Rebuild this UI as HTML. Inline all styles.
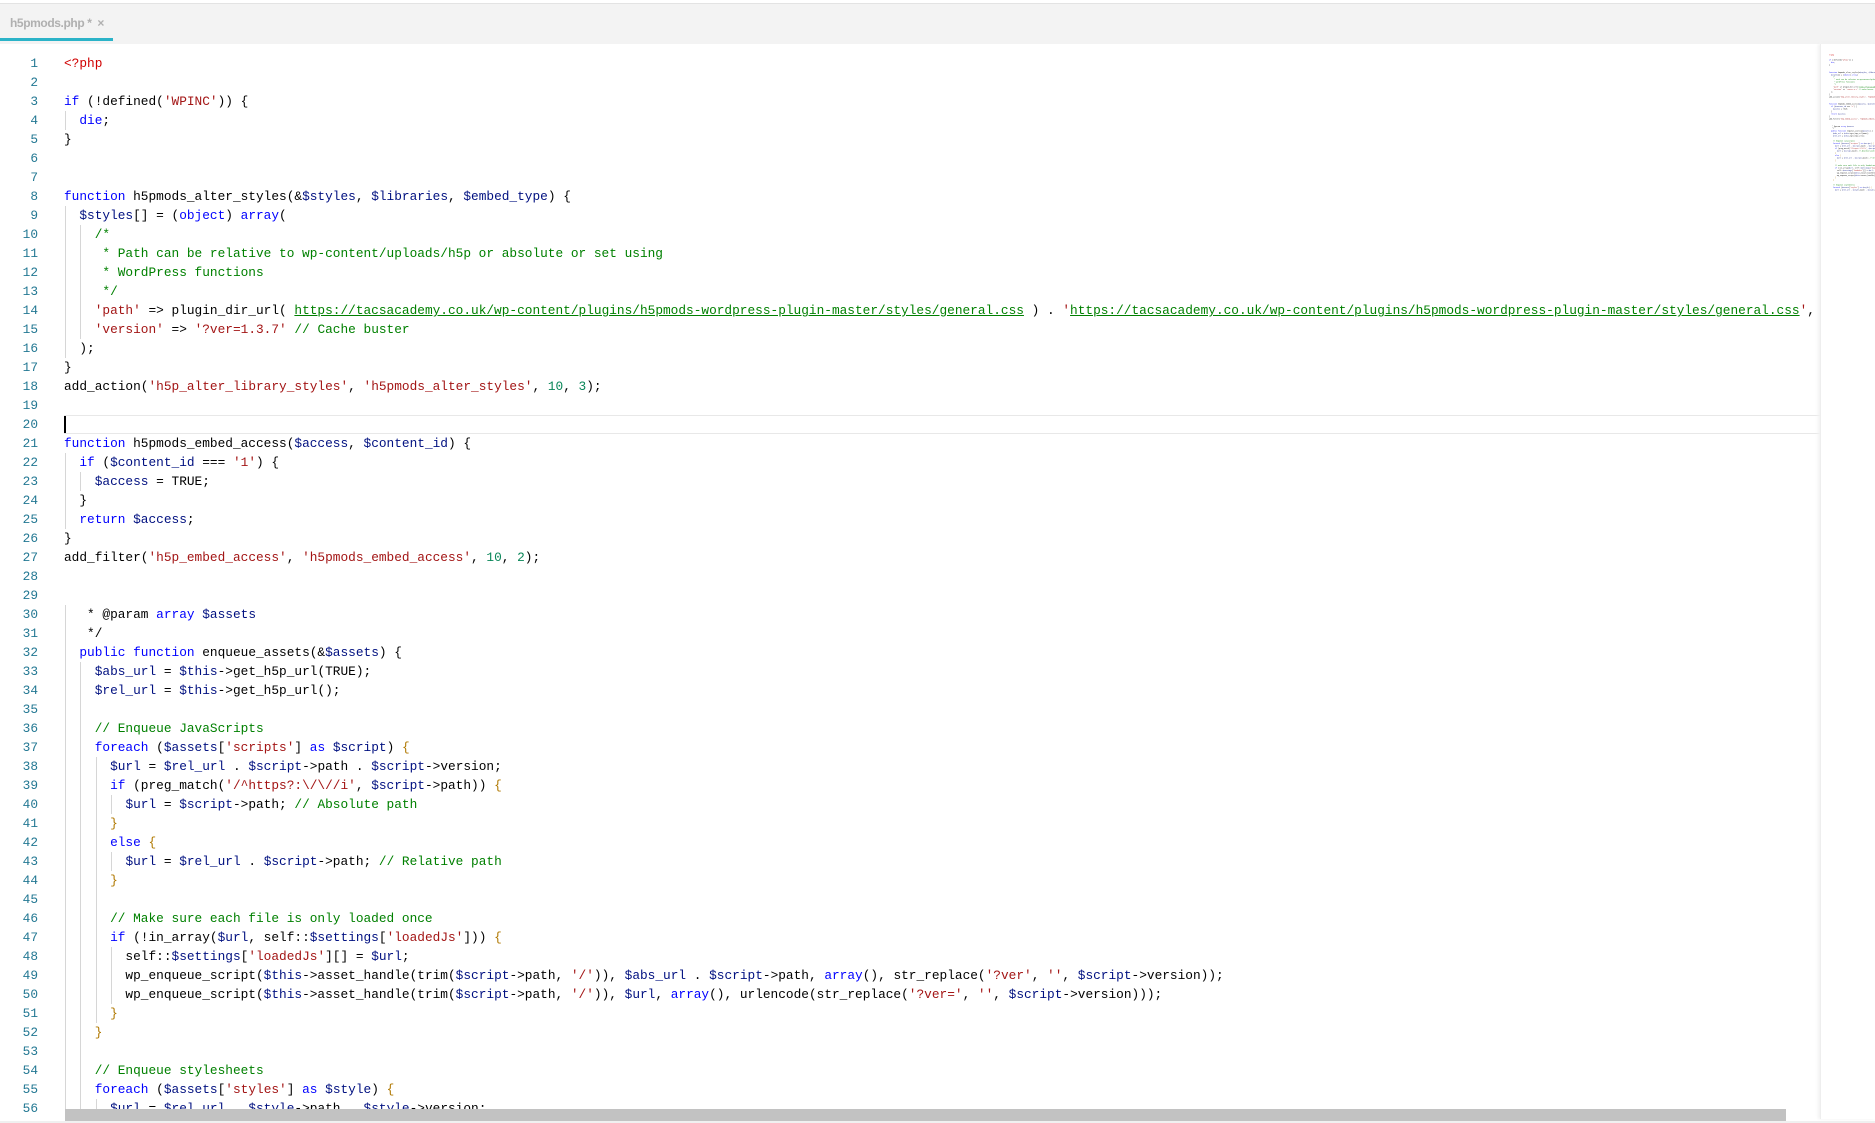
<!DOCTYPE html>
<html><head><meta charset="utf-8"><style>
html,body{margin:0;padding:0;width:1875px;height:1123px;overflow:hidden;background:#fff}
#top{position:absolute;left:0;top:0;width:1875px;height:3px;background:#fff;border-bottom:1px solid #e3e3e3}
#tabbar{position:absolute;left:0;top:4px;width:1875px;height:40px;background:#f3f3f3}
#tab{position:absolute;left:0;top:0;width:113px;height:37px;border-bottom:3px solid #2bb3c8;font:bold 12px "Liberation Sans",sans-serif;color:#b0b0b0;line-height:38px;padding-left:10px;box-sizing:border-box;letter-spacing:-0.4px}
#ed{position:absolute;left:0;top:54px;width:1820px;height:1060px;font:12.8px/19px "Liberation Mono",monospace;color:#000}
.ln{position:absolute;left:0;width:38px;text-align:right;color:#237893}
.cl{position:absolute;left:64px;white-space:pre}
.g{position:absolute;width:1px;height:19px;background:#d6d6d6}
.k{color:#0000ff}.s{color:#a31515}.c{color:#008000}.v{color:#001080}.n{color:#098658}.b{color:#b07800}
.b0{color:#000}
.u{color:#008000;text-decoration:underline}
#cur{position:absolute;left:64px;top:361px;width:1756px;height:17px;border-top:1px solid #e8e8e8;border-bottom:1px solid #e8e8e8}
#caret{position:absolute;left:64px;top:362px;width:1.5px;height:17px;background:#000}
#mm{position:absolute;left:1820px;top:44px;width:55px;height:1075px;border-left:1px solid #eee;box-shadow:-2px 0 3px #f2f2f2;overflow:hidden;background:#fff}
#mmi{position:absolute;left:8px;top:10px;transform:scale(0.129);transform-origin:0 0;font:12.8px/19px "Liberation Mono",monospace;white-space:pre;width:1800px}
#sb{position:absolute;left:65px;top:1109px;width:1721px;height:12px;background:#c2c2c2}
#bot{position:absolute;left:0;top:1121px;width:1875px;height:2px;background:#f0f0f0}
</style></head><body>
<div id="top"></div>
<div id="tabbar"><div id="tab">h5pmods.php * &nbsp;×</div></div>
<div id="ed"><div id="cur"></div><div id="caret"></div></div>
<div id="mm"><div id="mmi"></div></div>
<div id="sb"></div><div id="bot"></div>
<script>
var U='https://tacsacademy.co.uk/wp-content/plugins/h5pmods-wordpress-plugin-master/styles/general.css';
var L=[
'<span style="color:#d00000">&lt;?php</span>',
'',
'<span class="k">if</span> (!defined(<span class="s">\'WPINC\'</span>)) <span class="b0">{</span>',
'  <span class="k">die</span>;',
'<span class="b0">}</span>',
'','',
'<span class="k">function</span> h5pmods_alter_styles(&amp;<span class="v">$styles</span>, <span class="v">$libraries</span>, <span class="v">$embed_type</span>) <span class="b0">{</span>',
'  <span class="v">$styles</span>[] = (<span class="k">object</span>) <span class="k">array</span>(',
'    <span class="c">/*</span>',
'<span class="c">     * Path can be relative to wp-content/uploads/h5p or absolute or set using</span>',
'<span class="c">     * WordPress functions</span>',
'<span class="c">     */</span>',
'    <span class="s">\'path\'</span> =&gt; plugin_dir_url( <span class="u">'+U+'</span> ) . <span class="s">\'</span><span class="u">'+U+'</span><span class="s">\'</span>,',
'    <span class="s">\'version\'</span> =&gt; <span class="s">\'?ver=1.3.7\'</span> <span class="c">// Cache buster</span>',
'  );',
'<span class="b0">}</span>',
'add_action(<span class="s">\'h5p_alter_library_styles\'</span>, <span class="s">\'h5pmods_alter_styles\'</span>, <span class="n">10</span>, <span class="n">3</span>);',
'','',
'<span class="k">function</span> h5pmods_embed_access(<span class="v">$access</span>, <span class="v">$content_id</span>) <span class="b0">{</span>',
'  <span class="k">if</span> (<span class="v">$content_id</span> === <span class="s">\'1\'</span>) <span class="b0">{</span>',
'    <span class="v">$access</span> = TRUE;',
'  <span class="b0">}</span>',
'  <span class="k">return</span> <span class="v">$access</span>;',
'<span class="b0">}</span>',
'add_filter(<span class="s">\'h5p_embed_access\'</span>, <span class="s">\'h5pmods_embed_access\'</span>, <span class="n">10</span>, <span class="n">2</span>);',
'','',
'   * @param <span class="k">array</span> <span class="v">$assets</span>',
'   */',
'  <span class="k">public</span> <span class="k">function</span> enqueue_assets(&amp;<span class="v">$assets</span>) <span class="b0">{</span>',
'    <span class="v">$abs_url</span> = <span class="v">$this</span>-&gt;get_h5p_url(TRUE);',
'    <span class="v">$rel_url</span> = <span class="v">$this</span>-&gt;get_h5p_url();',
'',
'    <span class="c">// Enqueue JavaScripts</span>',
'    <span class="k">foreach</span> (<span class="v">$assets</span>[<span class="s">\'scripts\'</span>] <span class="k">as</span> <span class="v">$script</span>) <span class="b">{</span>',
'      <span class="v">$url</span> = <span class="v">$rel_url</span> . <span class="v">$script</span>-&gt;path . <span class="v">$script</span>-&gt;version;',
'      <span class="k">if</span> (preg_match(<span class="s">\'/^https?:\\/\\//i\'</span>, <span class="v">$script</span>-&gt;path)) <span class="b">{</span>',
'        <span class="v">$url</span> = <span class="v">$script</span>-&gt;path; <span class="c">// Absolute path</span>',
'      <span class="b">}</span>',
'      <span class="k">else</span> <span class="b">{</span>',
'        <span class="v">$url</span> = <span class="v">$rel_url</span> . <span class="v">$script</span>-&gt;path; <span class="c">// Relative path</span>',
'      <span class="b">}</span>',
'',
'      <span class="c">// Make sure each file is only loaded once</span>',
'      <span class="k">if</span> (!in_array(<span class="v">$url</span>, self::<span class="v">$settings</span>[<span class="s">\'loadedJs\'</span>])) <span class="b">{</span>',
'        self::<span class="v">$settings</span>[<span class="s">\'loadedJs\'</span>][] = <span class="v">$url</span>;',
'        wp_enqueue_script(<span class="v">$this</span>-&gt;asset_handle(trim(<span class="v">$script</span>-&gt;path, <span class="s">\'/\'</span>)), <span class="v">$abs_url</span> . <span class="v">$script</span>-&gt;path, <span class="k">array</span>(), str_replace(<span class="s">\'?ver\'</span>, <span class="s">\'\'</span>, <span class="v">$script</span>-&gt;version));',
'        wp_enqueue_script(<span class="v">$this</span>-&gt;asset_handle(trim(<span class="v">$script</span>-&gt;path, <span class="s">\'/\'</span>)), <span class="v">$url</span>, <span class="k">array</span>(), urlencode(str_replace(<span class="s">\'?ver=\'</span>, <span class="s">\'\'</span>, <span class="v">$script</span>-&gt;version)));',
'      <span class="b">}</span>',
'    <span class="b">}</span>',
'',
'    <span class="c">// Enqueue stylesheets</span>',
'    <span class="k">foreach</span> (<span class="v">$assets</span>[<span class="s">\'styles\'</span>] <span class="k">as</span> <span class="v">$style</span>) <span class="b">{</span>',
'      <span class="v">$url</span> = <span class="v">$rel_url</span> . <span class="v">$style</span>-&gt;path . <span class="v">$style</span>-&gt;version;'
];
var blankDepth={35:2,45:3,53:2,28:0,29:0};
var ed=document.getElementById('ed'),h='',mm='';
var cw=7.68;
for(var i=0;i<L.length;i++){
  var n=i+1,t=i*19,s=L[i];
  h+='<div class="ln" style="top:'+t+'px">'+n+'</div>';
  var sp=0; var plain=s.replace(/<[^>]*>/g,''); while(plain[sp]===' ')sp++;
  var d=s===''?(blankDepth[n]||0):Math.floor(sp/2);
  if(n>=30&&n<=31)d=Math.max(d,1);
  for(var k=0;k<d;k++){h+='<div class="g" style="left:'+(65+k*2*cw)+'px;top:'+t+'px"></div>';}
  h+='<div class="cl" style="top:'+t+'px">'+s+'</div>';
  mm+=s+'\n';
}
ed.insertAdjacentHTML('beforeend',h);
document.getElementById('mmi').innerHTML=mm;
</script>
</body></html>
